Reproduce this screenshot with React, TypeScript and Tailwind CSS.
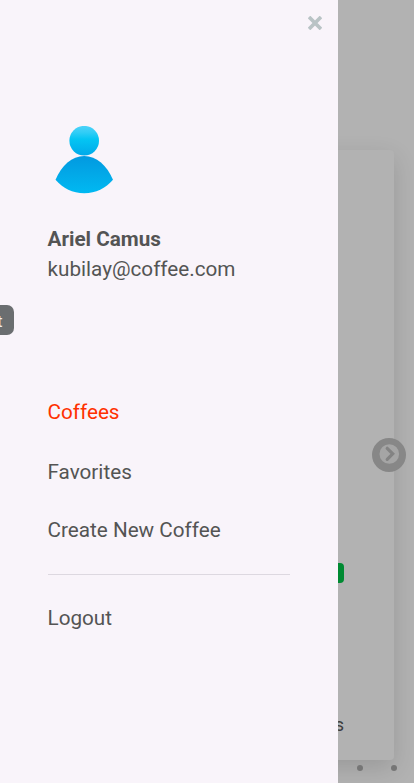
import React from 'react';

const links = [
  { label: 'Coffees', style: 'mt-[113px] text-[#ff3000]' },
  { label: 'Favorites', style: 'mt-[30px]' },
  { label: 'Create New Coffee', style: 'mt-[28px]' },
];

function Avatar() {
  return (
    <svg className="mt-[126px] ml-[7.500px] h-[68px] w-[59px] shrink-0" viewBox="0 0 59 68">
      <defs>
        <linearGradient id="head" x1="0" y1="0" x2="0" y2="1">
          <stop offset="0" stopColor="#4dd2f9" />
          <stop offset=".22" stopColor="#31cdf6" />
          <stop offset=".45" stopColor="#04c5f3" />
          <stop offset="1" stopColor="#00a9ea" />
        </linearGradient>
        <linearGradient id="body" x1="0" y1="0" x2="0" y2="1">
          <stop offset="0" stopColor="#0299e0" />
          <stop offset=".5" stopColor="#02a9e8" />
          <stop offset="1" stopColor="#00b9f2" />
        </linearGradient>
      </defs>
      <circle cx="29.2" cy="14.7" r="14.8" fill="url(#head)" />
      <path d="M.5 53.8C6.5 39.5 17 30 29.2 30S52 39.5 58 53.8C50.500 62.500 41 67.200 29.200 67.200S8 62.500.5 53.800Z" fill="url(#body)" />
    </svg>
  );
}

function Drawer() {
  return (
    <aside className="absolute top-0 left-0 flex h-full w-[338px] flex-col bg-[#f9f4fa] pr-12 pl-[47.500px] text-[20.7px] leading-[30px] text-[#545454]">
      <button aria-label="Close" className="absolute top-[16px] left-[308px] h-[14px] w-[14px]">
        <svg viewBox="0 0 14 14" className="h-[14px] w-[14px]">
          <path d="M2.300 2.300L11.700 11.700M11.700 2.300L2.300 11.700" stroke="#b9c3c5" strokeWidth="3.700" strokeLinecap="square" strokeLinejoin="round" />
        </svg>
      </button>
      <Avatar />
      <div className="mt-[30px] font-bold">Ariel Camus</div>
      <div>kubilay@coffee.com</div>
      <nav className="flex flex-col">
        {links.map((l) => (
          <a key={l.label} className={l.style}>{l.label}</a>
        ))}
        <hr className="mt-[29px] w-[242px] border-t border-[#ddd8e0]" />
        <a className="mt-[28px]">Logout</a>
      </nav>
    </aside>
  );
}

export default function App() {
  return (
    <div className="relative h-[783px] w-[414px] overflow-hidden bg-[#b2b2b2] font-['Roboto',sans-serif]">
      <main className="flex h-full flex-col pt-[150px]">
        <section className="flex h-[610px] w-[394px] flex-col items-end rounded-[4px] bg-[#b2b2b2] shadow-[0_8px_24px_rgba(0,0,0,0.14)]">
          <span className="mt-[413px] mr-[50px] flex h-5 w-8 items-center justify-end rounded-[4px] bg-[#008a32]" />
          <span className="mt-[127px] mr-[50px] text-[18px] leading-[30px] text-[#3c3c3c]">Details</span>
        </section>
        <div className="mt-[4.500px] mr-[17px] flex justify-end gap-7">
          <i className="h-1.5 w-1.5 rounded-full bg-[#767676]" />
          <i className="h-1.5 w-1.5 rounded-full bg-[#767676]" />
        </div>
      </main>
      <button aria-label="Next" className="absolute top-[438px] left-[371.500px] h-[34px] w-[34px]">
        <svg viewBox="0 0 34 34" className="h-[34px] w-[34px]">
          <circle cx="17" cy="17" r="17" fill="#878787" />
          <circle cx="17.300" cy="16" r="9.800" fill="#a5a5a5" />
          <path d="M15.200 10.300L20.700 15.800L15.200 21.300" fill="none" stroke="#838383" strokeWidth="3.200" strokeLinecap="round" />
        </svg>
      </button>
      <Drawer />
      <div className="absolute top-[305px] left-0 flex h-[30px] w-[14px] items-center justify-end rounded-r-[7px] bg-[#6b6e70] pt-[3px] pr-[11.500px] text-[17px] text-[#f0eef2]">t</div>
    </div>
  );
}
